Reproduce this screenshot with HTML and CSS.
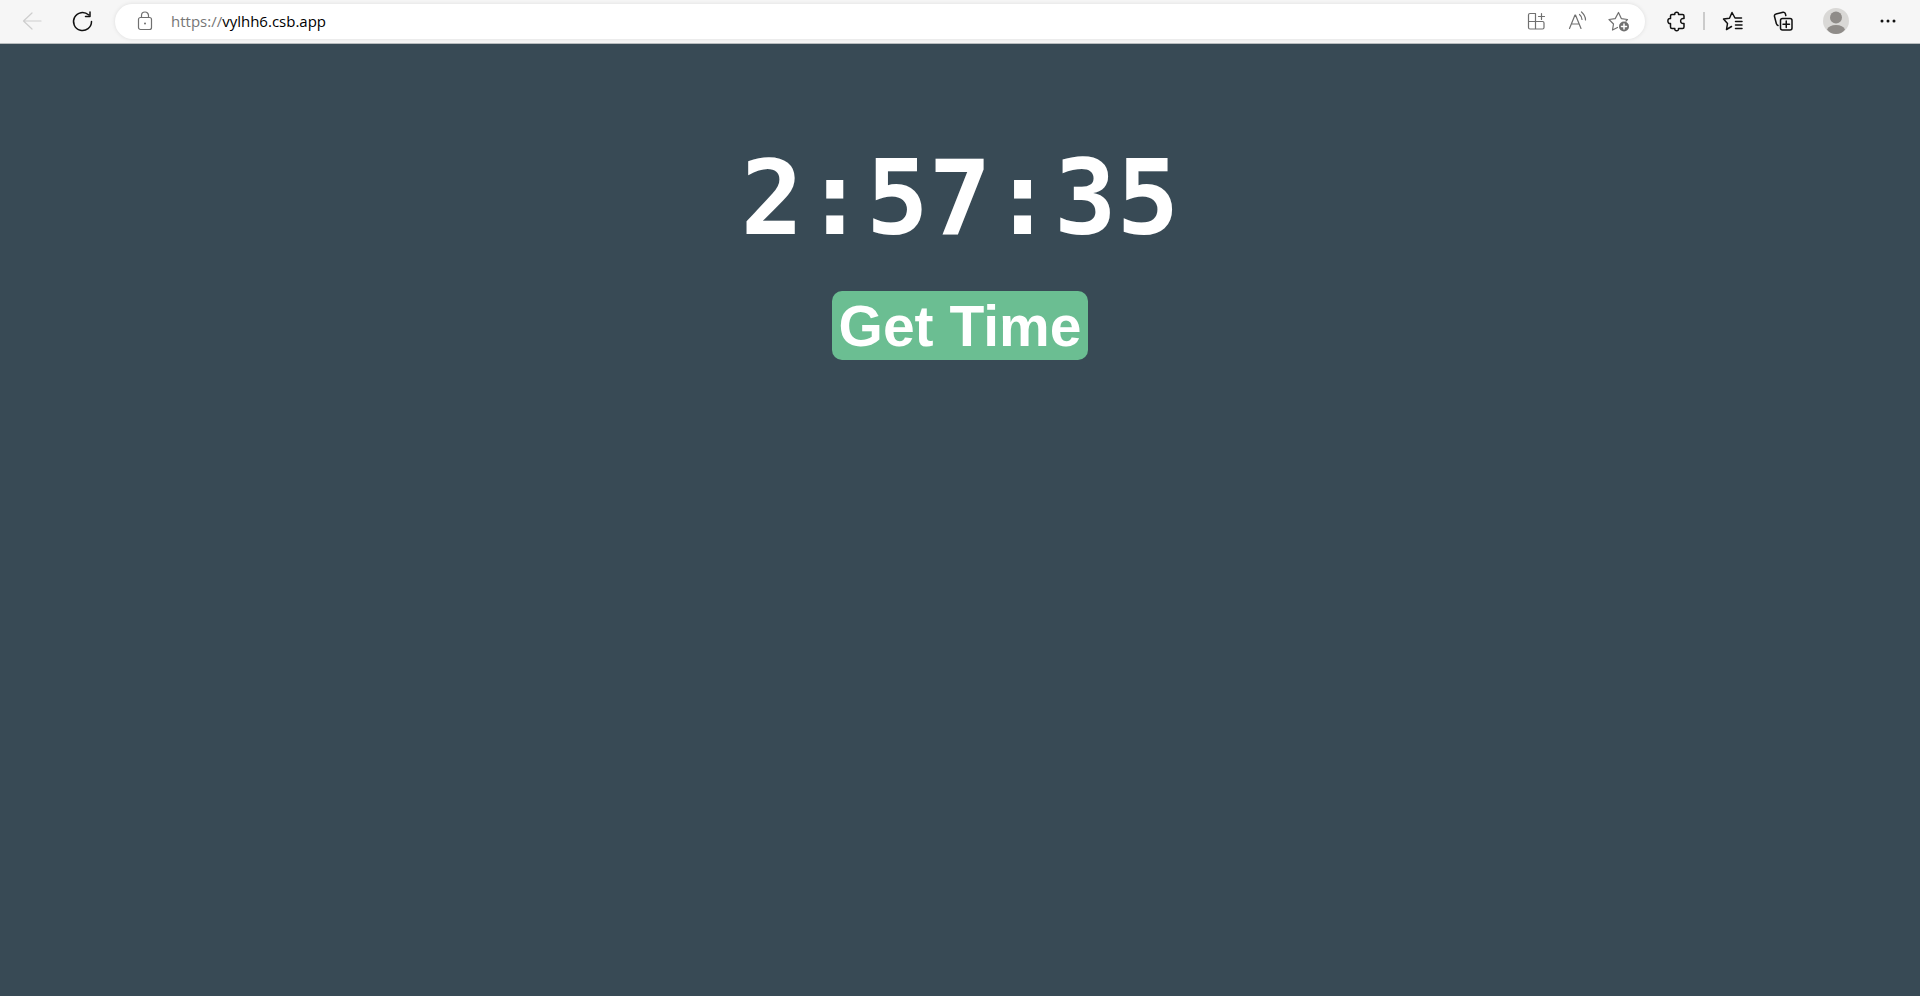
FILE: index.html
```html
<!DOCTYPE html>
<html lang="en">
<head>
<meta charset="utf-8">
<title>Get Time</title>
<link rel="stylesheet" href="styles.css">
</head>
<body>
<header class="toolbar">
  <nav class="nav">
    <button class="tool back" aria-label="Back" disabled><svg class="icon" viewBox="0 0 24 24"><path d="M21 12H3.500M12 4l-8.500 8 8.500 8"/></svg></button>
    <button class="tool" aria-label="Refresh"><svg class="icon bold" viewBox="0 0 24 24"><path d="M18.500 5.800A9 9 0 1 0 21.500 12.500M20 3v4.500h-4.500"/></svg></button>
  </nav>
  <div class="address">
    <button class="lock" aria-label="Site information"><svg class="icon" viewBox="0 0 24 24"><rect x="5.500" y="8.500" width="13" height="12" rx="2"/><path d="M8.500 8.500V6.500a3.500 3.500 0 0 1 7 0v2"/><circle class="fill" cx="12" cy="14.500" r="1"/></svg></button>
    <div class="url" role="textbox" contenteditable="true" spellcheck="false" aria-label="Address"><span class="scheme">https://</span>vylhh6.csb.app</div>
    <button class="tool inner" aria-label="Apps"><svg class="icon" viewBox="0 0 24 24"><path d="M10.500 4.500H5A1.500 1.500 0 0 0 3.500 6v12.500A1.500 1.500 0 0 0 5 20h12.500a1.500 1.500 0 0 0 1.500-1.500V14a1.500 1.500 0 0 0-1.500-1.500h-14M10.500 4.500V20M16.500 4.500v6M13.500 7.500h6"/></svg></button>
    <button class="tool inner" aria-label="Read aloud"><svg class="icon" viewBox="0 0 24 24"><path d="M3.500 19.500L9 6h.5L15 19.500M5.500 15h7.500M13.500 5.500q2.500 2 2.500 5M15.500 3q4 3.500 4 8"/></svg></button>
    <button class="tool inner" aria-label="Add to favorites"><svg class="icon" viewBox="0 0 24 24"><path d="M10.500 18.500L5.500 21l1-6L2 10.500l6.200-.9L11.500 3.500l2.800 6.100 6.200.9-1.500 1.500"/><circle class="fill" cx="17" cy="17.500" r="5"/><path class="plus" d="M17 15v5M14.500 17.500h5"/></svg></button>
  </div>
  <button class="tool" aria-label="Extensions"><svg class="icon bold" viewBox="0 0 24 24"><path d="M7 5.500h2.800c-.7-3 4.400-3 3.700 0H17.500a1.500 1.500 0 0 1 1.500 1.500v2.500c-4.500-1-4.500 6 0 5V18a1.500 1.500 0 0 1-1.500 1.500h-4c.7 3-4.400 3-3.700 0H7A1.500 1.500 0 0 1 5.500 18v-3.500c-3.500 .7-3.500-5.700 0-5V7A1.500 1.500 0 0 1 7 5.500z"/></svg></button>
  <span class="divider"></span>
  <div class="tools">
    <button class="tool" aria-label="Favorites"><svg class="icon bold" viewBox="0 0 24 24"><path d="M11.500 17.500L6.500 20.500l1-6L3.500 10l6-.8L12 3.500l3 5.500h6.500M15.500 12.500H22M15.500 16H22M15.500 19.500H22"/></svg></button>
    <button class="tool" aria-label="Collections"><svg class="icon bold" viewBox="0 0 24 24"><path d="M6 16.500a2.500 2.500 0 0 1-1.600-1.800L2.500 7.500a2 2 0 0 1 1.500-2.500l7-1.700a2 2 0 0 1 2.400 1.500l.4 1.700"/><rect x="8.500" y="9.500" width="11.500" height="11.500" rx="2"/><path d="M14.250 12v6.500M11 15.250h6.500"/></svg></button>
    <button class="tool" aria-label="Profile"><svg class="avatar" viewBox="0 0 26 26"><circle class="disc" cx="13" cy="13" r="13"/><circle class="person" cx="13" cy="9.500" r="6"/><path class="person" d="M4 21.500Q6 17 13 17t9 4.500Q18.500 26 13 26t-9-4.500z"/></svg></button>
    <button class="tool" aria-label="Settings and more"><svg class="icon" viewBox="0 0 24 24"><circle class="fill" cx="6" cy="12" r="1.500"/><circle class="fill" cx="12" cy="12" r="1.500"/><circle class="fill" cx="18" cy="12" r="1.500"/></svg></button>
  </div>
</header>
<main class="page">
  <h1 class="clock">2:57:35</h1>
  <button class="get-time">Get Time</button>
</main>
</body>
</html>
```
FILE: styles.css
```css
* { box-sizing: border-box; }
body {
  margin: 0;
  min-height: 100vh;
  display: flex;
  flex-direction: column;
  background: #384a55;
  color: #fff;
  font-family: "Liberation Sans", Arial, sans-serif;
}
button { border: 0; padding: 0; background: none; color: inherit; cursor: pointer; }
.toolbar {
  display: flex;
  align-items: center;
  height: 44px;
  padding: 0 12px 1px;
  background: #f6f6f6;
  border-bottom: 1px solid #b8bcbe;
  color: #111;
}
.nav { display: flex; gap: 10px; }
.tool { display: grid; place-items: center; width: 40px; height: 36px; }
.back { color: #cecece; }
.icon { display: block; width: 24px; height: 24px; fill: none; stroke: currentColor; stroke-width: 1.2; stroke-linejoin: round; stroke-linecap: round; }
.bold { stroke-width: 1.5; }
.icon .fill { fill: currentColor; stroke: none; }
.icon .plus { stroke: #fff; stroke-width: 1.5; }
.address {
  flex: 1;
  display: flex;
  align-items: center;
  height: 35px;
  margin: 0 12px 0 13px;
  padding: 0 6px 0 18px;
  border-radius: 18px;
  background: #fff;
  box-shadow: 0 0 4px #0000001a;
  color: #707070;
}
.url {
  flex: 1;
  margin-left: 14px;
  font: 15px/20px "Open Sans", "Noto Sans", sans-serif;
  color: #000;
  outline: 0;
}
.scheme { color: #767676; }
.inner { width: 41px; }
.divider { width: 2px; height: 18px; margin: 0 7px 0 6px; background: #cbcbcb; }
.tools { display: flex; gap: 12px; }
.avatar { display: block; width: 26px; height: 26px; }
.disc { fill: #d9d8d6; }
.person { fill: #8f8c89; }
.page {
  flex: 1;
  display: flex;
  flex-direction: column;
  align-items: center;
  padding-top: 94px;
}
.clock {
  margin: 0;
  font: bold 104px/120px "DejaVu Sans Mono", monospace;
}
.get-time {
  margin-top: 33px;
  padding: 3px 7px 1px;
  border-radius: 10px;
  background: #6bbe92;
  color: #fff;
  font: bold 57px/65px "Liberation Sans", Arial, sans-serif;
}
```
